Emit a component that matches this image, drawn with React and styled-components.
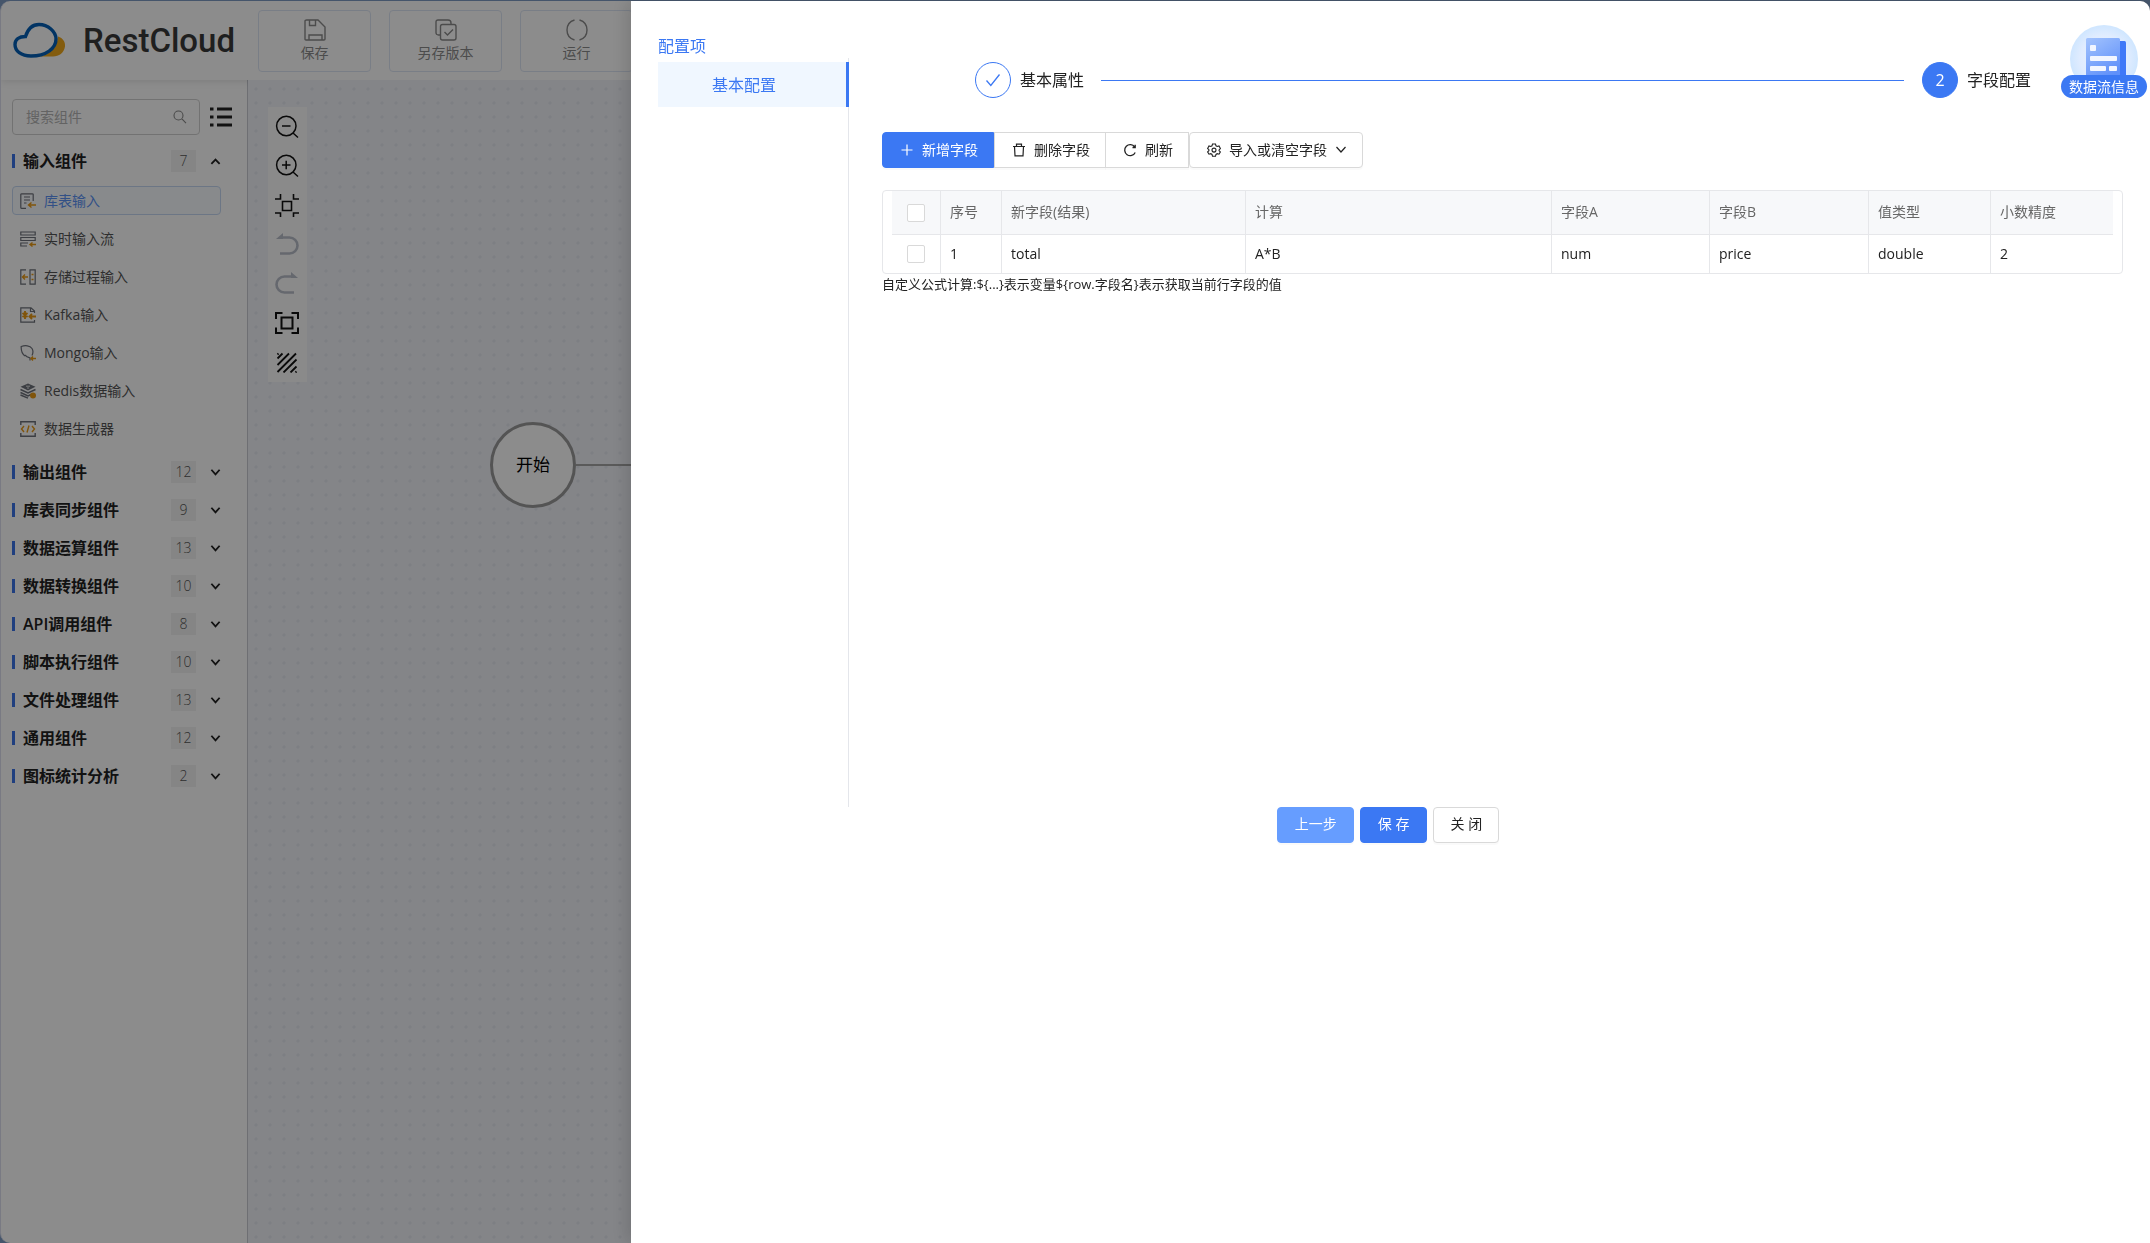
import React, { useState } from 'react';
import styled, { createGlobalStyle, css } from 'styled-components';

const GlobalStyle = createGlobalStyle`
   * {
      box-sizing: border-box;
   }

   body {
      margin: 0;
      background: #7f9cc4;
      font-family: 'Open Sans', 'Noto Sans CJK SC', sans-serif;
      font-size: 14px;
      line-height: 22px;
      color: #222;
   }

   button, input {
      font: inherit;
      color: inherit;
   }

   svg {
      display: block;
      flex: none;
   }
`;

const Page = styled.div`
   height: 100vh;
   padding-top: 1px;
   overflow: hidden;
`;

const Window = styled.div`
   display: flex;
   flex-direction: column;
   height: 100%;
   border-left: 1px solid #dcdfee;
   border-radius: 10px;
   overflow: hidden;
   background: #fff;
`;

const Header = styled.header`
   display: flex;
   align-items: center;
   height: 79px;
   flex: none;
   padding-left: 12px;
   position: relative;
   box-shadow: 0 1px 8px rgba(0, 0, 0, .12);
`;

const Logo = styled.a`
   display: flex;
   align-items: center;
   width: 245px;
   gap: 16px;
   color: #3a3a3a;
   text-decoration: none;
   font-family: Roboto, sans-serif;
   font-size: 33px;
   font-weight: 500;
   line-height: 40px;
`;

const HeaderButtons = styled.div`
   display: flex;
   gap: 18px;
`;

const HeaderButton = styled.button`
   display: flex;
   flex-direction: column;
   align-items: center;
   justify-content: center;
   gap: 1px;
   width: 113px;
   height: 62px;
   padding: 2px 0 0;
   border: 1px solid #dde6f5;
   border-radius: 4px;
   background: #fff;
   color: #8b8b8b;
`;

const Body = styled.div`
   display: flex;
   flex: 1;
   min-height: 0;
`;

const Sidebar = styled.aside`
   width: 247px;
   flex: none;
   padding: 19px 0 0 11px;
   border-right: 1px solid #c9cbd2;
`;

const SearchRow = styled.div`
   display: flex;
   align-items: center;
   gap: 10px;
   margin-bottom: 7px;
`;

const SearchBox = styled.label`
   display: flex;
   align-items: center;
   width: 188px;
   height: 36px;
   padding: 0 12px 0 13px;
   border: 1px solid #d0d0d0;
   border-radius: 4px;
   color: #888;
`;

const SearchInput = styled.input`
   flex: 1;
   min-width: 0;
   padding: 0;
   border: none;
   outline: none;
   background: none;

   &::placeholder {
      color: #b4b4b4;
      opacity: 1;
   }
`;

const PlainButton = styled.button`
   display: flex;
   align-items: center;
   justify-content: center;
   padding: 0;
   border: none;
   background: none;
   color: #222;
`;

const GroupHeader = styled.button`
   display: flex;
   align-items: center;
   width: 209px;
   height: 38px;
   padding: 0;
   border: none;
   background: none;
   color: #222;
   font-size: 16px;
   font-weight: 600;
   text-align: left;
`;

const Bar = styled.span`
   width: 3px;
   height: 14px;
   margin-right: 8px;
   background: #3b74e8;
`;

const GroupName = styled.span`
   flex: 1;
`;

const Count = styled.span`
   width: 25px;
   height: 22px;
   margin-right: 14px;
   background: #f2f2f2;
   color: #555;
   font-size: 14px;
   font-weight: 300;
   line-height: 21px;
   text-align: center;
`;

const ItemList = styled.div`
   display: flex;
   flex-direction: column;
   gap: 9px;
   padding: 6px 0 10px;
`;

const Item = styled.button`
   display: flex;
   align-items: center;
   gap: 8px;
   width: 209px;
   height: 29px;
   padding: 0 7px;
   border: 1px solid ${props => props.$active ? '#c5d8f3' : 'transparent'};
   border-radius: 4px;
   background: ${props => props.$active ? '#f8fbff' : 'none'};
   color: ${props => props.$active ? '#5b93f5' : '#555'};
`;

const Canvas = styled.main`
   position: relative;
   flex: 1;
   background-color: #f0f2f8;
   background-image: radial-gradient(circle at 8px 10px, #e4e7ee 1px, transparent 2px);
   background-size: 14px 14px;
   background-position: 0 13px;
`;

const CanvasTools = styled.div`
   position: absolute;
   left: 20px;
   top: 27px;
   display: flex;
   flex-direction: column;
   width: 39px;
   padding: 0 0 2px;
   background: #fcfcfc;
`;

const ToolButton = styled(PlainButton)`
   height: 39px;
   padding-right: 1px;
   color: ${props => props.disabled ? '#b9bdc9' : '#111'};
`;

const StartNode = styled.div`
   position: absolute;
   left: 242px;
   top: 342px;
   display: flex;
   align-items: center;
   justify-content: center;
   width: 86px;
   height: 86px;
   border: 3px solid #999;
   border-radius: 50%;
   background: #fff;
   color: #000;
   font-size: 17px;
`;

const Edge = styled.div`
   position: absolute;
   left: 328px;
   right: 0;
   top: 384px;
   height: 2px;
   background: #a4a4a4;
`;

const Mask = styled.div`
   position: fixed;
   inset: 0;
   background: rgba(0, 0, 0, .45);
`;

const Drawer = styled.section`
   position: fixed;
   top: 1px;
   right: 0;
   bottom: 0;
   left: 631px;
   padding: 33px 27px 0;
   border-radius: 0 10px 0 0;
   background: #fff;
   box-shadow: -6px 0 16px rgba(0, 0, 0, .12);
`;

const DrawerBody = styled.div`
   display: flex;
   min-height: 773px;
`;

const ConfigMenu = styled.nav`
   display: flex;
   flex-direction: column;
   width: 191px;
   flex: none;
   font-size: 16px;
   line-height: 24px;
   color: #3b78f3;
`;

const MenuList = styled.div`
   flex: 1;
   padding-top: 4px;
   border-right: 1px solid #e4e6eb;
`;

const MenuItem = styled.a`
   display: block;
   margin-right: -1px;
   padding: 11px 0 10px 54px;
   border-right: 3px solid #3b78f3;
   background: #f0f7ff;
   color: inherit;
   text-decoration: none;
`;

const Content = styled.div`
   flex: 1;
   min-width: 0;
   padding: 28px 0 0 33px;
`;

const Steps = styled.div`
   display: flex;
   align-items: center;
   padding: 0 92px 0 93px;
   margin-bottom: 34px;
   font-size: 16px;
`;

const StepCircle = styled.span`
   display: flex;
   align-items: center;
   justify-content: center;
   width: 36px;
   height: 36px;
   margin-right: 9px;
   border: 1px solid #3b78f3;
   border-radius: 50%;
   ${props => props.$filled ? css`
      background: #3b78f3;
      color: #fff;
   ` : css`
      background: #fff;
      color: #3b78f3;
   `}
`;

const StepLine = styled.span`
   flex: 1;
   height: 1px;
   margin: 0 18px 0 17px;
   background: #3b78f3;
`;

const Toolbar = styled.div`
   display: flex;
   margin-bottom: 22px;
`;

const ToolbarButton = styled.button`
   display: flex;
   align-items: center;
   gap: 8px;
   height: 36px;
   padding: 0 15px 1px 17px;
   margin-left: ${props => props.$joined ? '-1px' : '0'};
   border: 1px solid ${props => props.$primary ? '#3b78f3' : '#d9d9d9'};
   border-radius: ${props => props.$radius || '0'};
   background: ${props => props.$primary ? '#3b78f3' : '#fff'};
   color: ${props => props.$primary ? '#fff' : '#222'};
   box-shadow: 0 2px 0 rgba(0, 0, 0, .02);
   line-height: 20px;
   white-space: nowrap;
`;

const TableFrame = styled.div`
   padding: 0 9px;
   border: 1px solid #e6e7ea;
   border-radius: 4px;
`;

const Table = styled.table`
   width: 100%;
   border-collapse: separate;
   border-spacing: 0;
   table-layout: fixed;
   text-align: left;

   th, td {
      padding: 0 9px;
      border-right: 1px solid #e6e7ea;
   }

   th {
      height: 44px;
      padding-bottom: 2px;
      border-bottom: 1px solid #e6e7ea;
      background: #f7f8fa;
      color: #666;
      font-weight: 400;
   }

   td {
      height: 38px;
   }

   th:first-child, td:first-child {
      padding: 0;
   }

   th:last-child, td:last-child {
      border-right: none;
   }
`;

const Checkbox = styled.input`
   display: block;
   appearance: none;
   width: 18px;
   height: 18px;
   margin: 0 auto;
   border: 1px solid #d9d9d9;
   border-radius: 2px;
   background: #fff;

   &:checked {
      background: #3b78f3;
   }
`;

const Note = styled.div`
   font-size: 13px;
   line-height: 20px;
`;

const Footer = styled.footer`
   display: flex;
   justify-content: center;
   padding-right: 5px;
   gap: 6px;
`;

const FooterButton = styled.button`
   height: 36px;
   padding: 0 16px 2px 17px;
   border: 1px solid ${props => props.$border};
   border-radius: 4px;
   background: ${props => props.$bg};
   color: ${props => props.$color || '#fff'};
   box-shadow: 0 2px 0 rgba(0, 0, 0, .02);
`;

const FlowInfo = styled.button`
   position: absolute;
   top: 24px;
   right: 3px;
   display: flex;
   flex-direction: column;
   align-items: center;
   padding: 0;
   border: none;
   background: none;
`;

const FlowLabel = styled.span`
   margin-top: -18px;
   padding: 0 8px;
   border-radius: 12px;
   background: #3b78f3;
   color: #fff;
   line-height: 23px;
`;

const Svg = ({ size = 16, box = 24, width = 1.5, children }) => (
   <svg width={size} height={size} viewBox={`0 0 ${box} ${box}`} fill="none" stroke="currentColor" strokeWidth={width}>
      {children}
   </svg>
);

const CloudLogo = () => (
   <svg width="54" height="38" viewBox="0 0 54 38" fill="none">
      <path d="M45 14.500C50 16 52.500 20 52 24.500C51 31 46 34.500 40 34.500H27C37 32 44 26 45 14.500Z" fill="#efa81c" />
      <path d="M12.500 14.500C15 6.500 20 2.500 26 2.500C35 2.500 43 9.500 43 17C43 26.500 33 34 18 34C8 34 2 29 2 22.500C2 17.500 6 14.500 12.500 14.500Z" fill="#fff" stroke="#0560b6" strokeWidth="3.400" />
   </svg>
);

const SaveIcon = () => (
   <Svg size={22} box={22} width={1.4}>
      <path d="M2.500 1H14L21 8V20Q21 21 20 21H2Q1 21 1 20V2Q1 1 2.500 1ZM5.500 1V6.500H11.500V1M5 21V16H18V21" />
   </Svg>
);

const CopyIcon = () => (
   <Svg size={22} box={22} width={1.4}>
      <rect x="5.500" y="5.500" width="15.500" height="15.500" rx="2" />
      <path d="M5.500 16H3.500Q1 16 1 13.500V3Q1 1 3 1H13Q16 1 16 4V5.500M9.500 13L12.500 16L18 10.500" />
   </Svg>
);

const RunIcon = () => (
   <Svg size={22} box={22} width={1.4}>
      <path d="M8.500 1C-1.500 4 -1.500 18 8.500 21M13.500 1C23.500 4 23.500 18 13.500 21" />
   </Svg>
);

const Chevron = ({ up, size = 11, width = 2 }) => (
   <Svg size={size} box={12} width={width}>
      <path d={up ? 'M1.500 8.500L6 4L10.500 8.500' : 'M1.500 3L6 8L10.500 3'} />
   </Svg>
);

// component icons, 16x16, grey outline with an orange accent
const itemIcons = {
   table: (
      <>
         <path d="M13.200 8V1.500Q13.200 .8 12.400 .8H1.800Q.8 .8 .8 1.600V14.400Q.8 15.300 1.800 15.300H6M4 4H10M4 7H10M4 10H6.500" strokeWidth="1.200" />
         <path d="M16 12H9M11.500 9.500L8.500 12L11.500 14.500" stroke="#e99a15" />
      </>
   ),
   stream: (
      <>
         <path d="M.8 1H15.200V4H.8ZM.8 6.500H15.200V9.500H.8ZM8 12H.8V15H7" strokeWidth="1.200" />
         <path d="M16 13.500H10.500M12.500 11.500L10 13.500L12.500 15.500" stroke="#e99a15" />
      </>
   ),
   procedure: (
      <>
         <path d="M6 .8H.8V15.200H6M10 .8H15.200V15.200H10Z" strokeWidth="1.200" />
         <path d="M8 8H2.500M5 5.500L2.500 8L5 10.500M11.500 5.500H13.500M11.500 10.500H13.500" stroke="#e99a15" />
      </>
   ),
   kafka: (
      <>
         <path d="M14.500 6V4L11 .8H.8V15.200H14.500V13M10.500 .8V4.500H14.500" strokeWidth="1.200" />
         <path d="M16 9.500H10M12 7L9.500 9.500L12 12M5 4V12M2.500 6L7.500 10M7.500 6L2.500 10" stroke="#e99a15" strokeWidth="1.900" />
      </>
   ),
   mongo: (
      <>
         <path d="M5 11C2 9 1 5 1.200 1.500C5 .2 10 .3 12 3.500C13.500 6 13 8.500 12 10.500M5 11C5.500 9.500 6 11 6.500 11.500L10 13V15.500" strokeWidth="1.200" />
         <path d="M16 13.500H11.500M13 11.500L11 13.500L13 15.500" stroke="#e99a15" />
      </>
   ),
   redis: (
      <>
         <path d="M.5 6.500L8 10L15.500 6.500M.5 9.500L8 13L11 11.500M.5 12L8 15.200" />
         <path d="M8 .5L15.500 3.800L8 7.500L.5 3.800Z" fill="currentColor" stroke="none" />
         <path d="M6 3.200H10M7 5H9" stroke="#fff" strokeWidth=".8" />
         <circle cx="13" cy="12.500" r="3" fill="#e99a15" stroke="none" />
      </>
   ),
   generator: (
      <>
         <path d="M.8 4V.8H15.200V4M.8 12V15.200H15.200V12" />
         <path d="M4 5L1.500 8L4 11M12 5L14.500 8L12 11M9 4.500L7 11.500" stroke="#e99a15" />
      </>
   ),
};

const items = [
   { name: '库表输入', icon: 'table' },
   { name: '实时输入流', icon: 'stream' },
   { name: '存储过程输入', icon: 'procedure' },
   { name: 'Kafka输入', icon: 'kafka' },
   { name: 'Mongo输入', icon: 'mongo' },
   { name: 'Redis数据输入', icon: 'redis' },
   { name: '数据生成器', icon: 'generator' },
];

const groups = [
   { name: '输入组件', count: 7, items },
   { name: '输出组件', count: 12 },
   { name: '库表同步组件', count: 9 },
   { name: '数据运算组件', count: 13 },
   { name: '数据转换组件', count: 10 },
   { name: 'API调用组件', count: 8 },
   { name: '脚本执行组件', count: 10 },
   { name: '文件处理组件', count: 13 },
   { name: '通用组件', count: 12 },
   { name: '图标统计分析', count: 2 },
];

const canvasTools = [
   { label: '缩小', icon: <path d="M21 11A9.700 9.700 0 1 1 1.600 11A9.700 9.700 0 1 1 21 11ZM18 18L23 22.500M7 11H15.500" /> },
   { label: '放大', icon: <path d="M21 11A9.700 9.700 0 1 1 1.600 11A9.700 9.700 0 1 1 21 11ZM18 18L23 22.500M7 11H15.500M11.200 6.800V15.200" /> },
   { label: '实际大小', icon: <path d="M7.500 8.500H16.500V17.500H7.500ZM0 6H5.500V1M18.500 1V6H24M24 20H18.500V25M5.500 25V20H0" strokeWidth="1.600" /> },
   { label: '撤销', disabled: true, icon: <><path d="M6 5.500H14.500A8 8 0 0 1 14.500 21.500H5" strokeWidth="2.600" /><path d="M1 7L8 1V7Z" fill="currentColor" stroke="none" /></> },
   { label: '重做', disabled: true, icon: <><path d="M18 5.500H9.500A8 8 0 0 0 9.500 21.500H19" strokeWidth="2.600" /><path d="M23 7L16 1V7Z" fill="currentColor" stroke="none" /></> },
   { label: '适应画布', icon: <path d="M6.500 7.500H17.500V18.500H6.500ZM1 9V3H7.500M16.500 3H23V9M23 17.500V23H16.500M7.500 23H1V17.500" strokeWidth="2" /> },
   { label: '网格', icon: <path d="M2.500 9.500L7.500 4.500M2.500 16L14 4.500M2.500 23L21 4.500M8.500 23.500L21.500 10.500M15.500 23.500L21.500 17.500M2.500 5.500L3.500 4.500M20.500 23.500L21.500 22.500" strokeWidth="1.800" /> },
];

const columns = [
   { title: '序号', width: 61 },
   { title: '新字段(结果)', width: 244 },
   { title: '计算', width: 306 },
   { title: '字段A', width: 158 },
   { title: '字段B', width: 159 },
   { title: '值类型', width: 122 },
   { title: '小数精度', width: 122 },
];

const rows = [
   ['1', 'total', 'A*B', 'num', 'price', 'double', '2'],
];

const App = () => {

   const [open, setOpen] = useState('输入组件');
   const [active, setActive] = useState('库表输入');

   return (
      <Page>
         <GlobalStyle />
         <Window>
            <Header>
               <Logo href="#"><CloudLogo />RestCloud</Logo>
               <HeaderButtons>
                  <HeaderButton><SaveIcon />保存</HeaderButton>
                  <HeaderButton><CopyIcon />另存版本</HeaderButton>
                  <HeaderButton><RunIcon />运行</HeaderButton>
               </HeaderButtons>
            </Header>
            <Body>
               <Sidebar>
                  <SearchRow>
                     <SearchBox>
                        <SearchInput type="text" placeholder="搜索组件" aria-label="搜索组件" />
                        <Svg size={14} box={14} width={1.1}>
                           <path d="M10 5.500A4.500 4.500 0 1 1 1 5.500A4.500 4.500 0 1 1 10 5.500ZM8.700 8.700L13 13.200" />
                        </Svg>
                     </SearchBox>
                     <PlainButton aria-label="列表">
                        <Svg size={22} box={22} width={3}>
                           <path d="M7 3H22M7 11H22M7 19H22M0 3H3.500M0 11H3.500M0 19H3.500" />
                        </Svg>
                     </PlainButton>
                  </SearchRow>
                  {groups.map(group => (
                     <React.Fragment key={group.name}>
                        <GroupHeader onClick={() => setOpen(open === group.name ? '' : group.name)}>
                           <Bar />
                           <GroupName>{group.name}</GroupName>
                           <Count>{group.count}</Count>
                           <Chevron up={open === group.name} />
                        </GroupHeader>
                        {open === group.name && group.items ? (
                           <ItemList>
                              {group.items.map(item => (
                                 <Item key={item.name} $active={active === item.name} onClick={() => setActive(item.name)}>
                                    <svg width="16" height="16" viewBox="0 0 16 16" fill="none" stroke="#6d717a" strokeWidth="1.400" color="#6d717a">
                                       {itemIcons[item.icon]}
                                    </svg>
                                    {item.name}
                                 </Item>
                              ))}
                           </ItemList>
                        ) : null}
                     </React.Fragment>
                  ))}
               </Sidebar>
               <Canvas>
                  <CanvasTools>
                     {canvasTools.map(tool => (
                        <ToolButton key={tool.label} aria-label={tool.label} disabled={tool.disabled}>
                           <Svg size={24} box={24}>{tool.icon}</Svg>
                        </ToolButton>
                     ))}
                  </CanvasTools>
                  <Edge />
                  <StartNode>开始</StartNode>
               </Canvas>
            </Body>
         </Window>
         <Mask />
         <Drawer>
            <DrawerBody>
               <ConfigMenu>
                  配置项
                  <MenuList>
                     <MenuItem href="#">基本配置</MenuItem>
                  </MenuList>
               </ConfigMenu>
               <Content>
                  <Steps>
                     <StepCircle>
                        <Svg size={16} box={16} width={1.3}><path d="M1.500 8.500L5.800 13.500L14.500 2.500" /></Svg>
                     </StepCircle>
                     基本属性
                     <StepLine />
                     <StepCircle $filled>2</StepCircle>
                     字段配置
                  </Steps>
                  <Toolbar>
                     <ToolbarButton $primary $radius="4px 0 0 4px">
                        <Svg size={14} box={14} width={1.2}><path d="M7 1.500V12.500M1.500 7H12.500" /></Svg>
                        新增字段
                     </ToolbarButton>
                     <ToolbarButton>
                        <Svg size={14} box={14} width={1.2}><path d="M1 3.500H13M4.500 3V1.200H9.500V3M2.500 3.500L3 12.800H11L11.500 3.500" /></Svg>
                        删除字段
                     </ToolbarButton>
                     <ToolbarButton $joined>
                        <Svg size={14} box={14} width={1.3}><path d="M12.200 9.500A5.500 5.500 0 1 1 11.700 4M12.200 1.800V4.500H9.500" /></Svg>
                        刷新
                     </ToolbarButton>
                     <ToolbarButton $radius="4px">
                        <Svg size={14} box={14} width={1.1}>
                           <path d="M5.500 1H8.500L9 2.800L10.200 3.500L12 3L13.400 5.600L12.100 6.900V7.800L13.400 8.900L12 11.200L10.200 10.700L9 11.400L8.500 13.200H5.500L5 11.400L3.800 10.700L2 11.200L.6 8.900L1.900 7.700V6.700L.6 5.500L2 3L3.800 3.500L5 2.800Z" />
                           <circle cx="7" cy="7.100" r="2" />
                        </Svg>
                        导入或清空字段
                        <Chevron size={12} width={1.2} />
                     </ToolbarButton>
                  </Toolbar>
                  <TableFrame>
                     <Table>
                        <colgroup>
                           <col width="49" />
                           {columns.map(col => <col key={col.title} width={col.width} />)}
                        </colgroup>
                        <thead>
                           <tr>
                              <th><Checkbox type="checkbox" aria-label="全选" /></th>
                              {columns.map(col => <th key={col.title}>{col.title}</th>)}
                           </tr>
                        </thead>
                        <tbody>
                           {rows.map(row => (
                              <tr key={row[0]}>
                                 <td><Checkbox type="checkbox" aria-label="选择" /></td>
                                 {row.map((cell, i) => <td key={i}>{cell}</td>)}
                              </tr>
                           ))}
                        </tbody>
                     </Table>
                  </TableFrame>
                  <Note>{'自定义公式计算:${...}表示变量${row.字段名}表示获取当前行字段的值'}</Note>
               </Content>
            </DrawerBody>
            <Footer>
               <FooterButton $bg="#669dff" $border="#669dff">上一步</FooterButton>
               <FooterButton $bg="#3b78f3" $border="#3b78f3">保 存</FooterButton>
               <FooterButton $bg="#fff" $border="#d9d9d9" $color="#222">关 闭</FooterButton>
            </Footer>
            <FlowInfo>
               <svg width="68" height="68" viewBox="0 0 68 68">
                  <defs>
                     <radialGradient id="halo">
                        <stop offset="0" stopColor="#eef4ff" />
                        <stop offset=".7" stopColor="#e0ecff" />
                        <stop offset="1" stopColor="#cfe6ff" />
                     </radialGradient>
                     <linearGradient id="sheet" x1="0" y1="0" x2=".5" y2="1">
                        <stop offset="0" stopColor="#a3c3fd" />
                        <stop offset="1" stopColor="#5f90fa" />
                     </linearGradient>
                  </defs>
                  <circle cx="34" cy="34" r="34" fill="url(#halo)" />
                  <rect x="44" y="16" width="12" height="40" rx="1.500" fill="#3f78f8" />
                  <rect x="16" y="13" width="34" height="43" rx="1.500" fill="url(#sheet)" />
                  <g fill="#f2f6ff">
                     <rect x="20" y="20" width="6" height="6" rx="1" />
                     <rect x="20" y="31" width="27" height="5" rx="1" />
                     <rect x="20" y="41" width="16" height="5" rx="1" />
                     <rect x="39" y="41" width="8" height="5" rx="1" />
                  </g>
               </svg>
               <FlowLabel>数据流信息</FlowLabel>
            </FlowInfo>
         </Drawer>
      </Page>
   );
};

export default App;
